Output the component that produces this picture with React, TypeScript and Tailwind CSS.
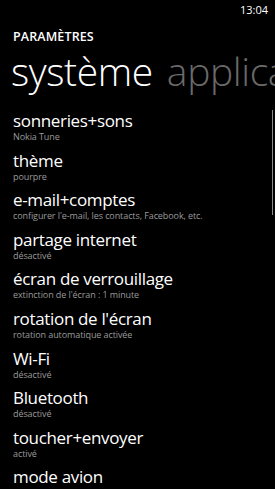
import React from 'react';

interface SettingItem {
  title: string;
  subtitle: string;
}

const items: SettingItem[] = [
  { title: 'sonneries+sons', subtitle: 'Nokia Tune' },
  { title: 'thème', subtitle: 'pourpre' },
  { title: 'e-mail+comptes', subtitle: "configurer l'e-mail, les contacts, Facebook, etc." },
  { title: 'partage internet', subtitle: 'désactivé' },
  { title: 'écran de verrouillage', subtitle: "extinction de l'écran : 1 minute" },
  { title: "rotation de l'écran", subtitle: 'rotation automatique activée' },
  { title: 'Wi-Fi', subtitle: 'désactivé' },
  { title: 'Bluetooth', subtitle: 'désactivé' },
  { title: 'toucher+envoyer', subtitle: 'activé' },
  { title: 'mode avion', subtitle: 'désactivé' },
];

const App: React.FC = () => {
  return (
    <div className="relative w-[275px] h-[489px] overflow-hidden bg-black text-white font-['Open_Sans',sans-serif]">
      {/* Status bar */}
      <div className="flex justify-end h-[20px] pr-[7px] pt-[2px]">
        <span className="text-[11px] leading-[16px] text-white">13:04</span>
      </div>

      {/* Page title */}
      <div className="pl-[13px] pt-[9px]">
        <h2 className="text-[12.5px] leading-[16px] font-semibold tracking-[0.01em]">PARAMÈTRES</h2>
      </div>

      {/* Pivot headers */}
      <div className="flex gap-[14px] pl-[11px] whitespace-nowrap mt-[1px]">
        <span className="text-[39px] leading-[50px] font-light tracking-[-0.01em]">système</span>
        <span className="text-[39px] leading-[50px] font-light tracking-[-0.01em] text-[#6a6a6a]">applications</span>
      </div>

      {/* Settings list */}
      <div className="flex flex-col pl-[13px] mt-[14px]">
        {items.map((item) => (
          <div key={item.title} className="h-[39.6px] flex flex-col">
            <span className="text-[17px] leading-[21px] tracking-[-0.02em] whitespace-nowrap">{item.title}</span>
            <span className="text-[9px] leading-[12px] tracking-[-0.01em] text-[#9a9a9a] whitespace-nowrap">{item.subtitle}</span>
          </div>
        ))}
      </div>

      {/* Scroll indicator */}
      <div className="absolute right-[2px] top-[110px] w-[1.5px] h-[105px] bg-[#8a8a8a]" />
    </div>
  );
};

export default App;
